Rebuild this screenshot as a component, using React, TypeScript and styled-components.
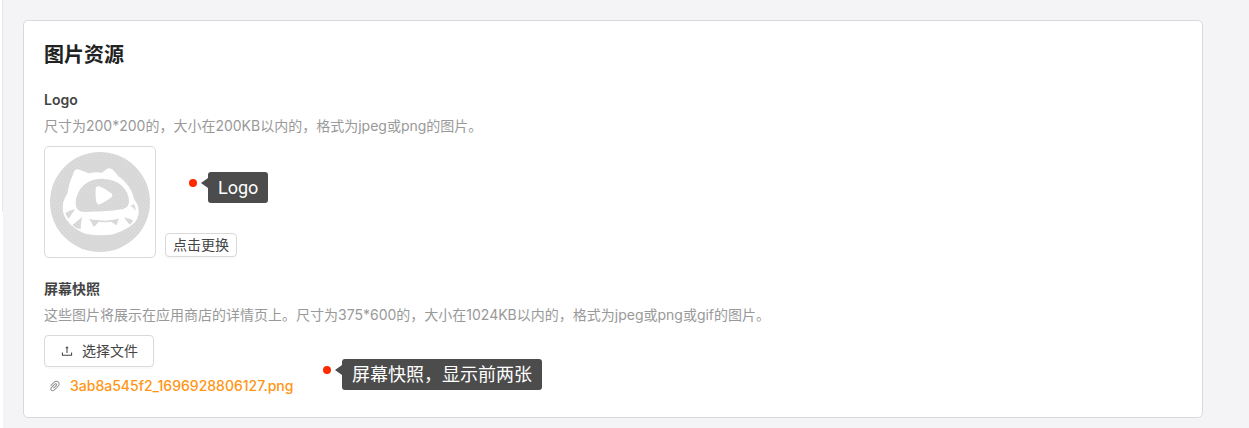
import React from "react";
import styled, { createGlobalStyle } from "styled-components";
import { AiOutlinePaperClip, AiOutlineUpload } from "react-icons/ai";

const GlobalStyle = createGlobalStyle`
  *, *::before, *::after { box-sizing: border-box; }
  body {
    margin: 0;
    background: #f4f4f7;
    font-family: Inter, "Noto Sans CJK SC", sans-serif;
    font-size: 14px;
    line-height: 22px;
    font-variant-ligatures: no-contextual;
    color: #444;
  }
`;

const Page = styled.div`
  display: flex;
  min-height: 100vh;
`;

const Rail = styled.div`
  flex: none;
  width: 3px;
  background: #fff;
`;

const RailEdge = styled.div`
  height: 212px;
  border-right: 1px solid #e8e8e4;
`;

const Main = styled.main`
  flex: 1;
  min-width: 0;
  padding: 20px 46px 10px 20px;
`;

const Card = styled.section`
  display: flex;
  flex-direction: column;
  gap: 20px;
  padding: 20px;
  background: #fff;
  border: 1px solid #d9d9db;
  border-radius: 5px;
`;

const Title = styled.h2`
  margin: 0;
  font-size: 20px;
  line-height: 28px;
  font-weight: 600;
  color: #222;
`;

const Field = styled.section`
  position: relative;
`;

const FieldTitle = styled.h3`
  margin: 0 0 4px;
  font-size: 14px;
  line-height: 22px;
  font-weight: 600;
  color: #444;
`;

const Hint = styled.p`
  margin: 0 0 9px;
  color: #999;
`;

const LogoRow = styled.div`
  display: flex;
  align-items: flex-end;
  gap: 9px;
`;

const LogoFrame = styled.div`
  display: flex;
  width: 112px;
  height: 112px;
  padding: 5px;
  border: 1px solid #d9d9d9;
  border-radius: 5px;
`;

const Button = styled.button<{ $small?: boolean }>`
  display: inline-flex;
  align-items: center;
  gap: 8px;
  height: ${(p) => (p.$small ? 24 : 32)}px;
  margin-bottom: ${(p) => (p.$small ? 1 : 0)}px;
  padding: 0 ${(p) => (p.$small ? 7 : 15)}px;
  border: 1px solid #d9d9d9;
  border-radius: 4px;
  background: #fff;
  box-shadow: 0 2px 0 rgba(0, 0, 0, 0.02);
  color: #444;
  font: inherit;
  white-space: nowrap;
  cursor: pointer;
`;

const FileRow = styled.div`
  display: flex;
  align-items: center;
  gap: 8px;
  margin-top: 8px;
  padding-left: 4px;
  color: #8c8c8c;
`;

const FileLink = styled.a`
  color: #ff9514;
  font-weight: 500;
  text-decoration: none;
`;

const Callout = styled.div<{ $left: number; $top: number }>`
  position: absolute;
  left: ${(p) => p.$left}px;
  top: ${(p) => p.$top}px;
  display: flex;
  align-items: flex-start;
`;

const Dot = styled.span`
  width: 8px;
  height: 8px;
  margin-top: 7px;
  border-radius: 50%;
  background: #ff2a00;
`;

const Arrow = styled.span`
  margin: 6px 0 0 4px;
  border: 5px solid transparent;
  border-left-width: 0;
  border-right: 7px solid #4c4c4c;
`;

const Bubble = styled.span`
  padding: 0 10px;
  border-radius: 3px;
  background: #4c4c4c;
  color: #fff;
  font-family: Roboto, "Noto Sans CJK SC", sans-serif;
  font-size: 18px;
  line-height: 31px;
  white-space: nowrap;
`;

function Note({ left, top, children }: { left: number; top: number; children: React.ReactNode }) {
  return (
    <Callout $left={left} $top={top}>
      <Dot />
      <Arrow />
      <Bubble>{children}</Bubble>
    </Callout>
  );
}

function AppLogo() {
  return (
    <svg width="100" height="100" viewBox="0 0 300 300" role="img" aria-label="Logo">
      <defs>
        <pattern id="grain" width="12" height="12" patternUnits="userSpaceOnUse">
          <rect width="12" height="12" fill="#dadada" />
          <rect x="0" y="0" width="3" height="3" fill="#d0d0d0" />
          <rect x="6" y="6" width="3" height="3" fill="#d0d0d0" />
        </pattern>
      </defs>
      <circle cx="150" cy="150" r="150" fill="url(#grain)" />
      <path
        fill="#fff"
        d="M70 64Q74 50 84 52L116 64Q136 59 156 62L170 51Q178 46 186 52Q198 62 204 72Q228 88 243 115Q249 128 252 142Q266 158 266 178Q266 200 252 214Q226 236 190 247Q150 254 106 245Q76 234 58 214Q38 192 38 168Q38 144 52 125Q56 94 70 64Z"
      />
      <g fill="url(#grain)">
        <path d="M77 155Q77 125 98 102Q120 81 152 80Q190 79 214 100Q237 122 237 148Q237 166 220 171Q190 177 160 178L104 180Q78 180 77 155Z" />
        <path d="M46 183Q60 174 75 172L56 200Q49 194 46 183Z" />
        <path d="M97 195L67 219Q78 230 92 232Q92 212 97 195Z" />
        <path d="M117 200Q130 205 144 204Q164 208 184 204Q196 204 207 199Q202 210 201 220Q192 216 184 209Q164 213 146 209Q140 218 130 225Q126 210 117 200Z" />
        <path d="M222 195Q234 200 249 204Q248 213 239 218Q229 208 222 195Z" />
        <path d="M240 160Q248 161 250 155Q257 162 257 176Q249 166 240 160Z" />
      </g>
      <path fill="#fff" d="M137 110Q137 101 148 103Q168 111 184 124Q190 130 184 136Q168 149 150 157Q142 159 139 150Q135 130 137 110Z" />
    </svg>
  );
}

export default function App() {
  return (
    <>
      <GlobalStyle />
      <Page>
        <Rail>
          <RailEdge />
        </Rail>
        <Main>
          <Card>
            <Title>图片资源</Title>
            <Field>
              <FieldTitle>Logo</FieldTitle>
              <Hint>尺寸为200*200的，大小在200KB以内的，格式为jpeg或png的图片。</Hint>
              <LogoRow>
                <LogoFrame>
                  <AppLogo />
                </LogoFrame>
                <Button type="button" $small>
                  点击更换
                </Button>
              </LogoRow>
              <Note left={145} top={83}>
                Logo
              </Note>
            </Field>
            <Field>
              <FieldTitle>屏幕快照</FieldTitle>
              <Hint>
                这些图片将展示在应用商店的详情页上。尺寸为375*600的，大小在1024KB以内的，格式为jpeg或png或gif的图片。
              </Hint>
              <Button type="button">
                <AiOutlineUpload size={14} aria-hidden />
                选择文件
              </Button>
              <FileRow>
                <AiOutlinePaperClip size={14} aria-hidden />
                <FileLink href="#file">3ab8a545f2_1696928806127.png</FileLink>
              </FileRow>
              <Note left={279} top={81}>
                屏幕快照，显示前两张
              </Note>
            </Field>
          </Card>
        </Main>
      </Page>
    </>
  );
}
